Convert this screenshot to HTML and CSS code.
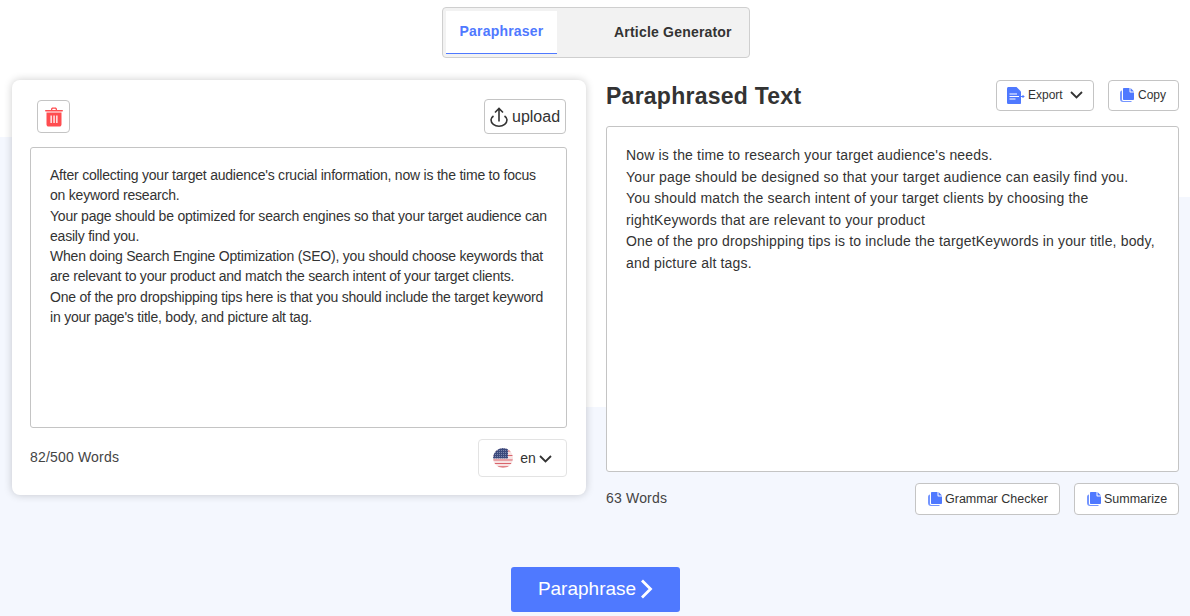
FILE: index.html
```html
<!DOCTYPE html>
<html lang="en">

<head>
    <meta charset="UTF-8">
    <meta name="viewport" content="width=device-width, initial-scale=1">
    <title>Paraphraser</title>
    <link rel="stylesheet" href="styles.css">
</head>

<body>
    <!-- page backdrop -->
    <svg class="backdrop" width="1190" height="616" viewBox="0 0 1190 616" aria-hidden="true">
        <path d="M0 137H300V407H900V197H1190V616H0Z" fill="#f4f7fe" />
    </svg>

    <div class="page">
        <nav class="tabs">
            <a class="tab tab-active">Paraphraser</a>
            <a class="tab tab-other">Article Generator</a>
        </nav>

        <main class="columns">
            <section class="card">
                <div class="card-top">
                    <button class="btn btn-trash" aria-label="Clear">
                        <svg width="18" height="20" viewBox="0 0 18 20">
                            <path d="M6 3V2.200C6 1 6.900.5 7.800.5h2.400C11.100.5 12 1 12 2.200V3h5.200c.5 0 .8.3.8.7s-.3.7-.8.7H.8C.3 4.400 0 4.100 0 3.700S.3 3 .8 3zM7.300 3h3.400V2.300c0-.4-.2-.6-.6-.6H7.900c-.4 0-.6.2-.6.6z" fill="#ff4d50" />
                            <path fill-rule="evenodd" d="M1.500 5.400h15V17.500c0 1.300-.9 2.100-2.100 2.100H3.600c-1.200 0-2.100-.8-2.100-2.100zM5.500 8.500V16h1.300V8.500zM8.400 8.500V16h1.300V8.500zM11.200 8.500V16h1.300V8.500z" fill="#ff4d50" />
                        </svg>
                    </button>
                    <button class="btn btn-upload">
                        <svg width="18" height="20" viewBox="0 0 18 20" fill="none" stroke="#333" stroke-width="1.600">
                            <path d="M9 14.500V1.500M5 5.500 9 1.500l4 4" />
                            <path d="M3.500 9C1.800 10.200 1 11.600 1 12.800 1 16.500 4.600 19.200 9 19.200s8-2.700 8-6.400c0-1.200-.8-2.600-2.500-3.800" />
                        </svg>
                        upload
                    </button>
                </div>
                <div class="textbox textbox-source">
                    <p>After collecting your target audience's crucial information, now is the time to focus on keyword research.</p>
                    <p>Your page should be optimized for search engines so that your target audience can easily find you.</p>
                    <p>When doing Search Engine Optimization (SEO), you should choose keywords that are relevant to your product and match the search intent of your target clients.</p>
                    <p>One of the pro dropshipping tips here is that you should include the target keyword in your page's title, body, and picture alt tag.</p>
                </div>
                <div class="card-bottom">
                    <span class="count">82/500 Words</span>
                    <button class="btn btn-lang">
                        <svg class="flag" width="20" height="20" viewBox="0 0 20 20">
                            <defs>
                                <clipPath id="flag-clip">
                                    <circle cx="10" cy="10" r="10" />
                                </clipPath>
                                <pattern id="flag-stars" width="2" height="2" patternUnits="userSpaceOnUse">
                                    <rect width="2" height="2" fill="#3c4a7d" />
                                    <rect width="1" height="1" fill="#7f89ad" />
                                </pattern>
                            </defs>
                            <g clip-path="url(#flag-clip)">
                                <rect width="20" height="20" fill="#f7e3e3" />
                                <path d="M0 3H20M0 7.500H20M0 12H20M0 15.500H20M0 18.800H20" stroke="#d9636b" stroke-width="1.200" />
                                <rect width="15" height="10.500" fill="url(#flag-stars)" />
                            </g>
                        </svg>
                        en
                        <svg class="lang-chevron" width="13" height="8" viewBox="0 0 13 8" fill="none" stroke="#333" stroke-width="1.800">
                            <path d="M1 1l5.500 5.500L12 1" />
                        </svg>
                    </button>
                </div>
            </section>

            <section class="result">
                <header class="result-top">
                    <h1>Paraphrased Text</h1>
                    <div class="actions">
                        <button class="btn btn-small btn-export">
                            <svg width="18" height="17" viewBox="0 0 18 17">
                                <path d="M1.500 0H9.500L14 4.500V16c0 .6-.5 1-1 1H1.500C.7 17 0 16.500 0 15.700V1.500C0 .7.700 0 1.500 0z" fill="#4f79ff" />
                                <path d="M2.500 7H10M2.500 9.500H12M2.500 12H8.500" stroke="#fff" stroke-width="1.100" />
                                <path d="M12 9.500h5M15.500 8 17 9.500 15.500 11" stroke="#4f79ff" stroke-width="1" fill="none" />
                            </svg>
                            Export
                            <svg class="chevron" width="13" height="8" viewBox="0 0 13 8" fill="none" stroke="#333" stroke-width="1.800">
                                <path d="M1 1l5.500 5.500L12 1" />
                            </svg>
                        </button>
                        <button class="btn btn-small btn-copy">
                            <svg class="copy-icon" width="14" height="14" viewBox="0 0 14 14">
                                <use href="#copy-shape" />
                            </svg>
                            Copy
                        </button>
                    </div>
                </header>
                <div class="textbox textbox-result">
                    <p>Now is the time to research your target audience's needs.</p>
                    <p>Your page should be designed so that your target audience can easily find you.</p>
                    <p>You should match the search intent of your target clients by choosing the rightKeywords that are relevant to your product</p>
                    <p>One of the pro dropshipping tips is to include the targetKeywords in your title, body, and picture alt tags.</p>
                </div>
                <footer class="result-bottom">
                    <span class="count">63 Words</span>
                    <div class="actions">
                        <button class="btn btn-small btn-tool btn-grammar">
                            <svg class="copy-icon" width="14" height="14" viewBox="0 0 14 14">
                                <use href="#copy-shape" />
                            </svg>
                            Grammar Checker
                        </button>
                        <button class="btn btn-small btn-tool btn-summary">
                            <svg class="copy-icon" width="14" height="14" viewBox="0 0 14 14">
                                <use href="#copy-shape" />
                            </svg>
                            Summarize
                        </button>
                    </div>
                </footer>
            </section>
        </main>

        <div class="submit">
            <button class="btn-go">
                Paraphrase
                <svg width="13" height="20" viewBox="0 0 13 20" fill="none" stroke="#fff" stroke-width="2.800">
                    <path d="M2 1.500 10.500 10 2 18.500" />
                </svg>
            </button>
        </div>
    </div>

    <!-- shared copy icon -->
    <svg class="icon-defs" width="0" height="0" aria-hidden="true">
        <defs>
            <g id="copy-shape">
                <path d="M3 .8C3 .3 3.400 0 3.800 0H9.500V3.500c0 .6.400 1 1 1H14V11c0 .6-.5 1-1 1H4c-.6 0-1-.4-1-1z" fill="#4f79ff" />
                <path d="M10.500 0 14 3.500H10.500z" fill="#4f79ff" />
                <path d="M2 2.500V11.500c0 .9.600 1.500 1.500 1.500H11.500V14H3C1.300 14 0 12.700 0 11V5C0 3.700.9 2.800 2 2.500z" fill="#7596ff" />
            </g>
        </defs>
    </svg>
</body>

</html>
```

FILE: styles.css
```css
/* Base styles */
* {
    margin: 0;
    padding: 0;
    box-sizing: border-box;
}

:root {
    --blue: #4f79ff;
    --line: #c4c4c4;
    --text: #333333;
}

html,
body {
    height: 616px;
    overflow: hidden;
}

body {
    position: relative;
    background-color: #ffffff;
    color: var(--text);
    font-family: "Liberation Sans", Arial, sans-serif;
    font-size: 14px;
}

.backdrop {
    position: absolute;
    top: 0;
    left: 0;
}

.icon-defs {
    position: absolute;
}

.page {
    position: relative;
    display: flex;
    flex-direction: column;
    padding-top: 7px;
}

button {
    font-family: inherit;
    color: var(--text);
}

/* Tabs */
.tabs {
    display: flex;
    align-self: center;
    width: 308px;
    height: 51px;
    margin-left: 2px;
    padding: 3px;
    background-color: #f2f2f2;
    border: 1px solid #cfcfcf;
    border-radius: 4px;
}

.tab {
    font-size: 14px;
    font-weight: bold;
    letter-spacing: 0.2px;
    line-height: 40px;
}

.tab-active {
    width: 111px;
    text-align: center;
    color: var(--blue);
    background-color: #ffffff;
    border-bottom: 1px solid var(--blue);
}

.tab-other {
    margin-left: 57px;
    line-height: 42px;
}

/* Columns */
.columns {
    display: grid;
    grid-template-columns: 574px 573px;
    column-gap: 20px;
    align-items: start;
    margin-top: 22px;
    margin-left: 12px;
}

.btn {
    display: flex;
    align-items: center;
    background-color: #ffffff;
    border: 1px solid var(--line);
    border-radius: 4px;
}

/* Source card */
.card {
    height: 415px;
    padding: 19px 19px 0 18px;
    background-color: #ffffff;
    border-radius: 8px;
    box-shadow: 0 0 8px rgba(0, 0, 0, 0.2);
}

.card-top {
    display: flex;
    justify-content: space-between;
    align-items: center;
    height: 35px;
    padding-left: 7px;
}

.btn-trash {
    justify-content: center;
    width: 33px;
    height: 33px;
}

.btn-upload {
    gap: 4px;
    width: 82px;
    height: 35px;
    margin-right: 1px;
    padding-left: 5px;
    font-size: 16px;
}

.textbox {
    background-color: #ffffff;
    border: 1px solid var(--line);
    border-radius: 3px;
}

.textbox-source {
    height: 281px;
    margin-top: 13px;
    padding: 17px 18px 17px 19px;
    letter-spacing: -0.22px;
    line-height: 20.3px;
}

.card-bottom {
    display: flex;
    justify-content: space-between;
    align-items: center;
    margin-top: 11px;
}

.count {
    padding-bottom: 2px;
    color: #444444;
    font-size: 14px;
    letter-spacing: 0.18px;
}

.btn-lang {
    justify-content: center;
    gap: 7px;
    width: 89px;
    height: 38px;
    padding-bottom: 1px;
    border-color: #e3e3e3;
    font-size: 14px;
}

.lang-chevron {
    margin-left: -4px;
    margin-top: 2px;
}

/* Result column */
.result-top {
    display: flex;
    justify-content: space-between;
    align-items: center;
    height: 31px;
}

h1 {
    padding-top: 2px;
    font-size: 23px;
    font-weight: bold;
    letter-spacing: 0.25px;
    color: var(--text);
}

.actions {
    display: flex;
    gap: 14px;
}

.btn-small {
    gap: 4px;
    height: 31px;
    padding-bottom: 1px;
    font-size: 12px;
}

.btn-export {
    gap: 3px;
    width: 98px;
    padding-left: 10px;
}

.btn-export .chevron {
    margin-left: 4px;
}

.btn-copy {
    width: 71px;
    padding-left: 11px;
}

.textbox-result {
    height: 346px;
    margin-top: 15px;
    padding: 18px 18px 18px 19px;
    font-size: 14px;
    letter-spacing: 0.17px;
    line-height: 21.6px;
}

.result-bottom {
    display: flex;
    justify-content: space-between;
    align-items: center;
    margin-top: 11px;
}

.btn-tool {
    gap: 3px;
    height: 32px;
    padding-left: 12px;
    font-size: 12.5px;
}

.btn-grammar {
    width: 145px;
}

.btn-summary {
    width: 105px;
}

/* Submit */
.submit {
    position: absolute;
    top: 567px;
    left: 0;
    width: 100%;
    display: flex;
    justify-content: center;
}

.btn-go {
    display: flex;
    align-items: center;
    justify-content: center;
    gap: 4px;
    width: 169px;
    height: 45px;
    margin-left: 1px;
    padding-bottom: 2px;
    color: #ffffff;
    background-color: var(--blue);
    border: none;
    border-radius: 3px;
    font-size: 19px;
}
```
